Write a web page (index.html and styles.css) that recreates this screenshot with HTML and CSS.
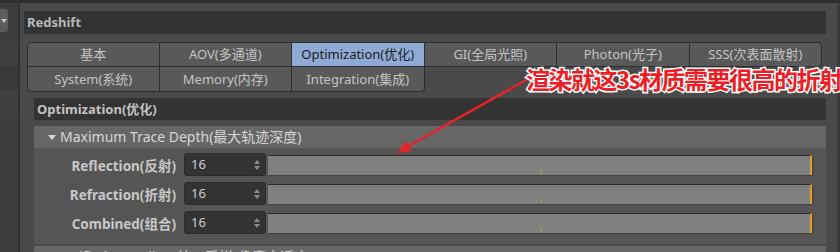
FILE: index.html
```html
<!DOCTYPE html>
<html lang="zh-CN">
<head>
    <meta charset="utf-8">
    <title>Redshift - Optimization</title>
    <link rel="stylesheet" href="styles.css">
</head>
<body>
    <div class="app">
        <aside class="side">
            <div class="side-btn">
                <svg width="6" height="4" viewBox="0 0 6 4"><path d="M0 0h6L3 4z" fill="#c8c8c8"/></svg>
            </div>
            <div class="side-row"></div>
            <div class="side-row alt"></div>
            <div class="side-row"></div>
        </aside>

        <main class="main">
            <div class="title-bar">Redshift</div>

            <div class="tabs">
                <div class="tab">基本</div>
                <div class="tab">AOV(多通道)</div>
                <div class="tab active">Optimization(优化)</div>
                <div class="tab">GI(全局光照)</div>
                <div class="tab">Photon(光子)</div>
                <div class="tab">SSS(次表面散射)</div>
                <div class="tab">System(系统)</div>
                <div class="tab">Memory(内存)</div>
                <div class="tab">Integration(集成)</div>
            </div>

            <div class="section">
                <div class="section-head">Optimization(优化)</div>

                <div class="group-head"><span class="caret"></span>Maximum Trace Depth(最大轨迹深度)</div>
                <div class="group-body">
                    <div class="row">
                        <div class="label">Reflection(反射)</div>
                        <div class="num">16<span class="spin"><svg width="6" height="10" viewBox="0 0 6 10"><path d="M0 4L3 0L6 4zM0 6h6L3 10z" fill="#8c8c8c"/></svg></span></div>
                        <div class="slider"><span class="tick"></span></div>
                    </div>
                    <div class="row">
                        <div class="label">Refraction(折射)</div>
                        <div class="num">16<span class="spin"><svg width="6" height="10" viewBox="0 0 6 10"><path d="M0 4L3 0L6 4zM0 6h6L3 10z" fill="#8c8c8c"/></svg></span></div>
                        <div class="slider"><span class="tick"></span></div>
                    </div>
                    <div class="row">
                        <div class="label">Combined(组合)</div>
                        <div class="num">16<span class="spin"><svg width="6" height="10" viewBox="0 0 6 10"><path d="M0 4L3 0L6 4zM0 6h6L3 10z" fill="#8c8c8c"/></svg></span></div>
                        <div class="slider"><span class="tick"></span></div>
                    </div>
                </div>

                <div class="group-head"><span class="caret"></span>Unified Sampling(统一采样/像素自适应)</div>
            </div>
        </main>

        <div class="scroll"></div>

        <!-- annotation drawn over the screenshot -->
        <svg class="arrow" width="840" height="252" viewBox="0 0 840 252">
            <line x1="528" y1="79" x2="405" y2="148" stroke="#e4232b" stroke-width="2.5"/>
            <path d="M397 153L406 141L412 151z" fill="#e4232b"/>
        </svg>
        <div class="note">渲染就这3s材质需要很高的折射</div>
    </div>
</body>
</html>
```

FILE: styles.css
```css
body {
    margin: 0;
    background: #4a4a4a;
    font-family: "Noto Sans", "Noto Sans CJK SC", sans-serif;
    font-size: 13px;
    color: #c6c6c6;
}

.app {
    position: relative;
    display: flex;
    width: 840px;
    height: 252px;
    overflow: hidden;
    border-top: 3px solid #2e2e2e;
    box-sizing: border-box;
}

/* left dock strip */
.side {
    width: 18px;
    flex-shrink: 0;
    background: #3d3d3d;
    border-right: 2px solid #313131;
    padding-top: 6px;
}

.side-btn {
    width: 8px;
    height: 23px;
    background: #5c5c5c;
    border-radius: 0 3px 3px 0;
    display: flex;
    align-items: center;
    justify-content: center;
    margin-bottom: 10px;
}

.side-row {
    height: 24px;
    background: #404040;
}

.side-row.alt {
    background: #3a3a3a;
}

.main {
    flex: 1;
    padding: 8px 0 0 4px;
    min-width: 0;
}

.title-bar {
    height: 23px;
    line-height: 23px;
    background: #333333;
    padding-left: 3px;
    font-weight: bold;
    font-size: 13px;
    color: #b3b8bd;
}

/* tab grid */
.tabs {
    display: grid;
    grid-template-columns: repeat(6, 1fr);
    margin: 8px 4px 0 3px;
}

.tab {
    height: 24px;
    line-height: 24px;
    text-align: center;
    background: #595959;
    border-right: 1px solid #2e2e2e;
    border-bottom: 1px solid #2e2e2e;
    white-space: nowrap;
    color: #c4c4c4;
}

.tab:nth-child(-n+6) {
    border-top: 1px solid #2e2e2e;
    height: 23px;
    line-height: 23px;
}

.tab:nth-child(1),
.tab:nth-child(7) {
    border-left: 1px solid #2e2e2e;
}

.tab:nth-child(1) { border-top-left-radius: 4px; }
.tab:nth-child(6) { border-top-right-radius: 4px; border-bottom-right-radius: 3px; }
.tab:nth-child(7) { border-bottom-left-radius: 4px; }
.tab:nth-child(9) { border-bottom-right-radius: 4px; }

.tab.active {
    background: #8faad4;
    color: #1d1d1d;
}

.section {
    margin: 6px 0 0 10px;
}

.section-head {
    height: 22px;
    line-height: 22px;
    background: #333333;
    padding-left: 3px;
    font-weight: bold;
    color: #c2c2c2;
    margin-bottom: 6px;
}

.group-head {
    height: 22px;
    line-height: 22px;
    background: #676767;
    padding-left: 14px;
    font-size: 14px;
    color: #d6d6d6;
    display: flex;
    align-items: center;
}

.caret {
    width: 0;
    height: 0;
    border-left: 4px solid transparent;
    border-right: 4px solid transparent;
    border-top: 5px solid #d6d6d6;
    margin-right: 4px;
}

.group-body {
    background: #555555;
    padding: 5px 14px 10px 0;
    display: flex;
    flex-direction: column;
    gap: 6px;
    margin-bottom: 2px;
}

.row {
    display: flex;
    align-items: center;
    height: 23px;
}

.label {
    width: 142px;
    text-align: right;
    font-weight: bold;
    font-size: 13.5px;
    color: #c8c8c8;
    margin-right: 8px;
    white-space: nowrap;
}

.num {
    width: 82px;
    height: 23px;
    box-sizing: border-box;
    background: #333333;
    border: 1px solid #2a2a2a;
    border-radius: 3px;
    padding: 0 5px 0 6px;
    line-height: 21px;
    color: #cfcfcf;
    display: flex;
    justify-content: space-between;
    align-items: center;
    margin-right: 2px;
}

.spin {
    display: flex;
}

.slider {
    position: relative;
    flex: 1;
    height: 20px;
    box-sizing: border-box;
    background: #808080;
    border-top: 1px solid #2b2b2b;
    border-right: 2px solid #e3a21a;
    box-shadow: 1px 1px 1px rgba(0,0,0,0.2);
}

.tick {
    position: absolute;
    left: 273px;
    bottom: 1px;
    width: 1px;
    height: 5px;
    background: #b8964c;
}

.scroll {
    width: 11px;
    flex-shrink: 0;
    border-right: 3px solid #3b3b3b;
}

.arrow {
    position: absolute;
    left: 0;
    top: -3px;
}

.note {
    position: absolute;
    left: 526px;
    top: 58px;
    font-family: "Noto Sans CJK SC", sans-serif;
    font-weight: bold;
    font-size: 24px;
    letter-spacing: -1.5px;
    color: #ee1c24;
    -webkit-text-stroke: 3px #ffffff;
    paint-order: stroke fill;
    white-space: nowrap;
}
```
